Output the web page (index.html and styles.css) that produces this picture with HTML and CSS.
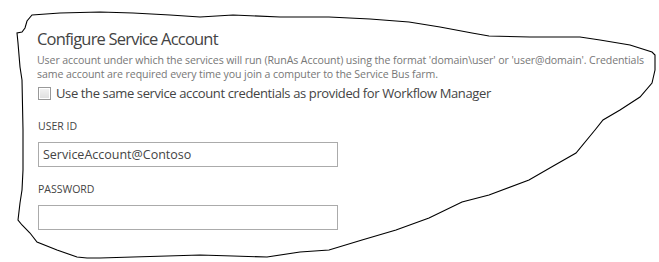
FILE: index.html
```html
<!DOCTYPE html>
<html>
<head>
<meta charset="utf-8">
<link rel="stylesheet" href="styles.css">
</head>
<body>
<div class="page">
  <section class="panel">
    <h1 class="title">Configure Service Account</h1>
    <p class="desc">User account under which the services will run (RunAs Account) using the format 'domain\user' or 'user@domain'. Credentials<br>same account are required every time you join a computer to the Service Bus farm.</p>
    <label class="check-row"><span class="checkbox"></span><span class="check-label">Use the same service account credentials as provided for Workflow Manager</span></label>
    <div class="field">
      <div class="field-label">USER ID</div>
      <div class="input">ServiceAccount@Contoso</div>
    </div>
    <div class="field">
      <div class="field-label">PASSWORD</div>
      <div class="input"></div>
    </div>
  </section>
  <svg class="outline" width="659" height="262" viewBox="0 0 659 262">
    <path d="M32,15 L60,13 L100,12 L133,13 L170,15 L200,17 L233,15 L280,17 L329,17 L370,19 L409,22 L440,27 L472,33 L489,36 L530,37 L580,37 L600,40 L630,45 L652,52 L655,55 L655,70 L652,83 L640,97 L620,110 L603,120 L595,130 L576,153 L555,165 L529,180 L489,195 L462,202 L429,218 L396,230 L362,240 L329,250 L300,252 L267,257 L233,256 L200,255 L167,256 L133,257 L100,258 L87,258 L77,257 L57,250 L37,242 L30,233 L22,225 L18,220 L20,203 L22,190 L23,170 L23,130 L22,80 L20,67 L18,43 L17,33 L22,32 L25,28 L27,21 Z" fill="none" stroke="#000" stroke-width="1.1"/>
  </svg>
</div>
</body>
</html>
```
FILE: styles.css
```css
html, body {
  margin: 0;
  padding: 0;
  background: #fff;
}
.page {
  position: relative;
  width: 659px;
  height: 262px;
  overflow: hidden;
}
.panel {
  padding: 28px 0 0 37px;
  display: flex;
  flex-direction: column;
  font-family: "Open Sans", "Noto Sans", sans-serif;
  color: #444;
}
.title {
  margin: 0;
  font-size: 16.5px;
  font-weight: 400;
  line-height: 22px;
  color: #444;
  letter-spacing: -0.8px;
}
.desc {
  margin: 3px 0 0;
  font-size: 10.6px;
  line-height: 14px;
  color: #777;
  white-space: nowrap;
  letter-spacing: -0.1px;
}
.check-row {
  display: flex;
  align-items: center;
  gap: 5px;
  margin-top: 3px;
  height: 18px;
}
.checkbox {
  width: 11px;
  height: 11px;
  border: 1px solid #999;
  background: linear-gradient(#f4f4f4, #dedede);
  box-shadow: inset 0 0 0 1px #fff;
  margin-left: 1px;
}
.check-label {
  font-size: 13px;
  color: #444;
  letter-spacing: -0.38px;
}
.field {
  display: flex;
  flex-direction: column;
  margin-top: 17px;
}
.field + .field {
  margin-top: 15px;
}
.field-label {
  font-size: 10.5px;
  line-height: 14px;
  color: #444;
  margin-left: 1px;
}
.input {
  margin-top: 9px;
  margin-left: 1px;
  width: 294px;
  height: 23px;
  border: 1px solid #ababab;
  font-size: 12.5px;
  line-height: 23px;
  padding-left: 4px;
  box-sizing: content-box;
  color: #444;
}
.outline {
  position: absolute;
  left: 0;
  top: 0;
  pointer-events: none;
}
```
